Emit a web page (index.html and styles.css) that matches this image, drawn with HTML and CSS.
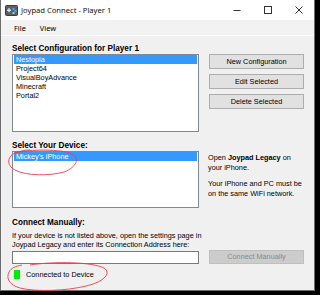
FILE: index.html
```html
<!DOCTYPE html>
<html lang="en">
<head>
    <meta charset="UTF-8">
    <title>Joypad Connect - Player 1</title>
    <link rel="stylesheet" href="styles.css">
</head>
<body>
    <div class="window">
        <div class="titlebar">
            <svg class="app-icon" width="13" height="11" viewBox="0 0 13 11">
                <rect x="0.5" y="0.5" width="12" height="10" rx="1" fill="#5a5f66" stroke="#3a3d42"/>
                <rect x="2" y="4.5" width="4" height="1.5" fill="#d8dde3"/>
                <rect x="3.25" y="3.2" width="1.5" height="4" fill="#d8dde3"/>
                <rect x="7.5" y="3" width="2" height="2" fill="#4aa3ff"/>
                <rect x="9.5" y="5" width="2" height="2" fill="#4aa3ff"/>
                <rect x="7.5" y="7" width="2" height="2" fill="#8fc8ff"/>
            </svg>
            <span class="title">Joypad Connect - Player 1</span>
            <div class="controls">
                <span class="ctl">
                    <svg width="10" height="10" viewBox="0 0 10 10"><path d="M1.5 5.5h7" stroke="#333" stroke-width="1"/></svg>
                </span>
                <span class="ctl">
                    <svg width="10" height="10" viewBox="0 0 10 10"><rect x="1.5" y="1.5" width="7" height="7" fill="none" stroke="#333" stroke-width="1"/></svg>
                </span>
                <span class="ctl">
                    <svg width="10" height="10" viewBox="0 0 10 10"><path d="M1.5 1.5l7 7M8.5 1.5l-7 7" stroke="#333" stroke-width="1"/></svg>
                </span>
            </div>
        </div>

        <div class="menubar">
            <span class="menu-item">File</span>
            <span class="menu-item">View</span>
        </div>

        <div class="content">
            <div class="heading first">Select Configuration for Player 1</div>
            <div class="row">
                <div class="listbox config-list">
                    <div class="item selected">Nestopia</div>
                    <div class="item">Project64</div>
                    <div class="item">VisualBoyAdvance</div>
                    <div class="item">Minecraft</div>
                    <div class="item">Portal2</div>
                </div>
                <div class="buttons">
                    <div class="button">New Configuration</div>
                    <div class="button">Edit Selected</div>
                    <div class="button">Delete Selected</div>
                </div>
            </div>

            <div class="heading">Select Your Device:</div>
            <div class="row">
                <div class="listbox device-list">
                    <div class="item selected">Mickey's iPhone</div>
                </div>
                <div class="help">
                    <p>Open <b>Joypad Legacy</b> on<br>your iPhone.</p>
                    <p>Your iPhone and PC must be<br>on the same WiFi network.</p>
                </div>
            </div>

            <div class="heading manual">Connect Manually:</div>
            <div class="desc">If your device is not listed above, open the settings page in<br>Joypad Legacy and enter its Connection Address here:</div>
            <div class="row manual-row">
                <div class="textbox"></div>
                <div class="button disabled">Connect Manually</div>
            </div>

            <div class="status">
                <span class="led"></span>
                <span>Connected to Device</span>
            </div>
        </div>
    </div>

    <!-- red marker scribbles drawn over the screenshot -->
    <svg class="marks" width="320" height="295" viewBox="0 0 320 295">
        <path d="M14 153 C30 149 62 149 72 154 C80 158 77 167 64 172 C50 176 26 176 15 170 C7 166 7 158 13 154 C18 151 26 150 30 150"
              fill="none" stroke="#e8404a" stroke-width="0.9"/>
        <path d="M30 265 C55 261 92 262 104 268 C112 273 104 282 86 286 C66 291 36 292 20 288 C9 285 6 278 9 272 C11 268 16 266 22 265"
              fill="none" stroke="#e8404a" stroke-width="0.9"/>
    </svg>
</body>
</html>
```

FILE: styles.css
```css
* {
    margin: 0;
    padding: 0;
    box-sizing: border-box;
}

body {
    width: 320px;
    height: 295px;
    background: #000;
    font-family: 'Liberation Sans', Arial, sans-serif;
    font-size: 7.3px;
    color: #000;
    position: relative;
    overflow: hidden;
}

.window {
    width: 315px;
    height: 291px;
    background: #f0f0f0;
    border: 1px solid #6e6e6e;
    border-top: 0;
    display: flex;
    flex-direction: column;
}

.titlebar {
    height: 20px;
    background: #fff;
    display: flex;
    align-items: center;
    padding-left: 4px;
}

.app-icon {
    margin-top: 1px;
}

.title {
    font-family: 'Noto Sans', sans-serif;
    font-size: 7.6px;
    margin-left: 3px;
    color: #111;
}

.controls {
    margin-left: auto;
    display: flex;
    height: 20px;
}

.ctl {
    width: 31px;
    display: flex;
    align-items: center;
    justify-content: center;
}

.menubar {
    height: 16px;
    background: #f2f2f2;
    border-bottom: 1px solid #fbfbfb;
    display: flex;
    align-items: center;
    padding-left: 13px;
    font-family: 'Noto Sans', sans-serif;
    font-size: 7.4px;
}

.menu-item {
    margin-right: 14px;
}

.content {
    padding: 0 9px 0 11px;
}

.heading {
    font-weight: bold;
    font-size: 8.2px;
    line-height: 10px;
    padding-top: 9px;
}

.heading.first {
    padding-top: 8px;
}

.heading.manual {
    padding-top: 10px;
}

.row {
    display: flex;
    gap: 10px;
}

.listbox {
    width: 187px;
    background: #fff;
    border: 1px solid #828790;
    padding: 0 1px;
}

.config-list {
    height: 78px;
}

.device-list {
    height: 57px;
}

.item {
    height: 9px;
    line-height: 9px;
    padding-left: 2px;
}

.item.selected {
    background: #3399ff;
    color: #fff;
}

.buttons {
    display: flex;
    flex-direction: column;
    gap: 5px;
}

.button {
    width: 95px;
    height: 15px;
    line-height: 13px;
    text-align: center;
    background: #e1e1e1;
    border: 1px solid #adadad;
}

.button.disabled {
    height: 14px;
    line-height: 12px;
    background: #cccccc;
    border-color: #bfbfbf;
    color: #8a8a8a;
}

.help {
    margin-left: -1px;
    padding-top: 2px;
    line-height: 10px;
}

.help p + p {
    margin-top: 6px;
}

.desc {
    line-height: 9px;
    margin-top: 2.5px;
}

.manual-row {
    margin-top: 1.5px;
    align-items: flex-end;
}

.textbox {
    width: 187px;
    height: 13px;
    background: #fff;
    border: 1px solid #7a7a7a;
}

.status {
    display: flex;
    align-items: center;
    margin-top: 6px;
    padding-left: 2px;
    height: 9px;
}

.led {
    width: 6px;
    height: 9px;
    background: #00ee00;
    margin-right: 6px;
}

.marks {
    position: absolute;
    left: 0;
    top: 0;
    pointer-events: none;
}
```
